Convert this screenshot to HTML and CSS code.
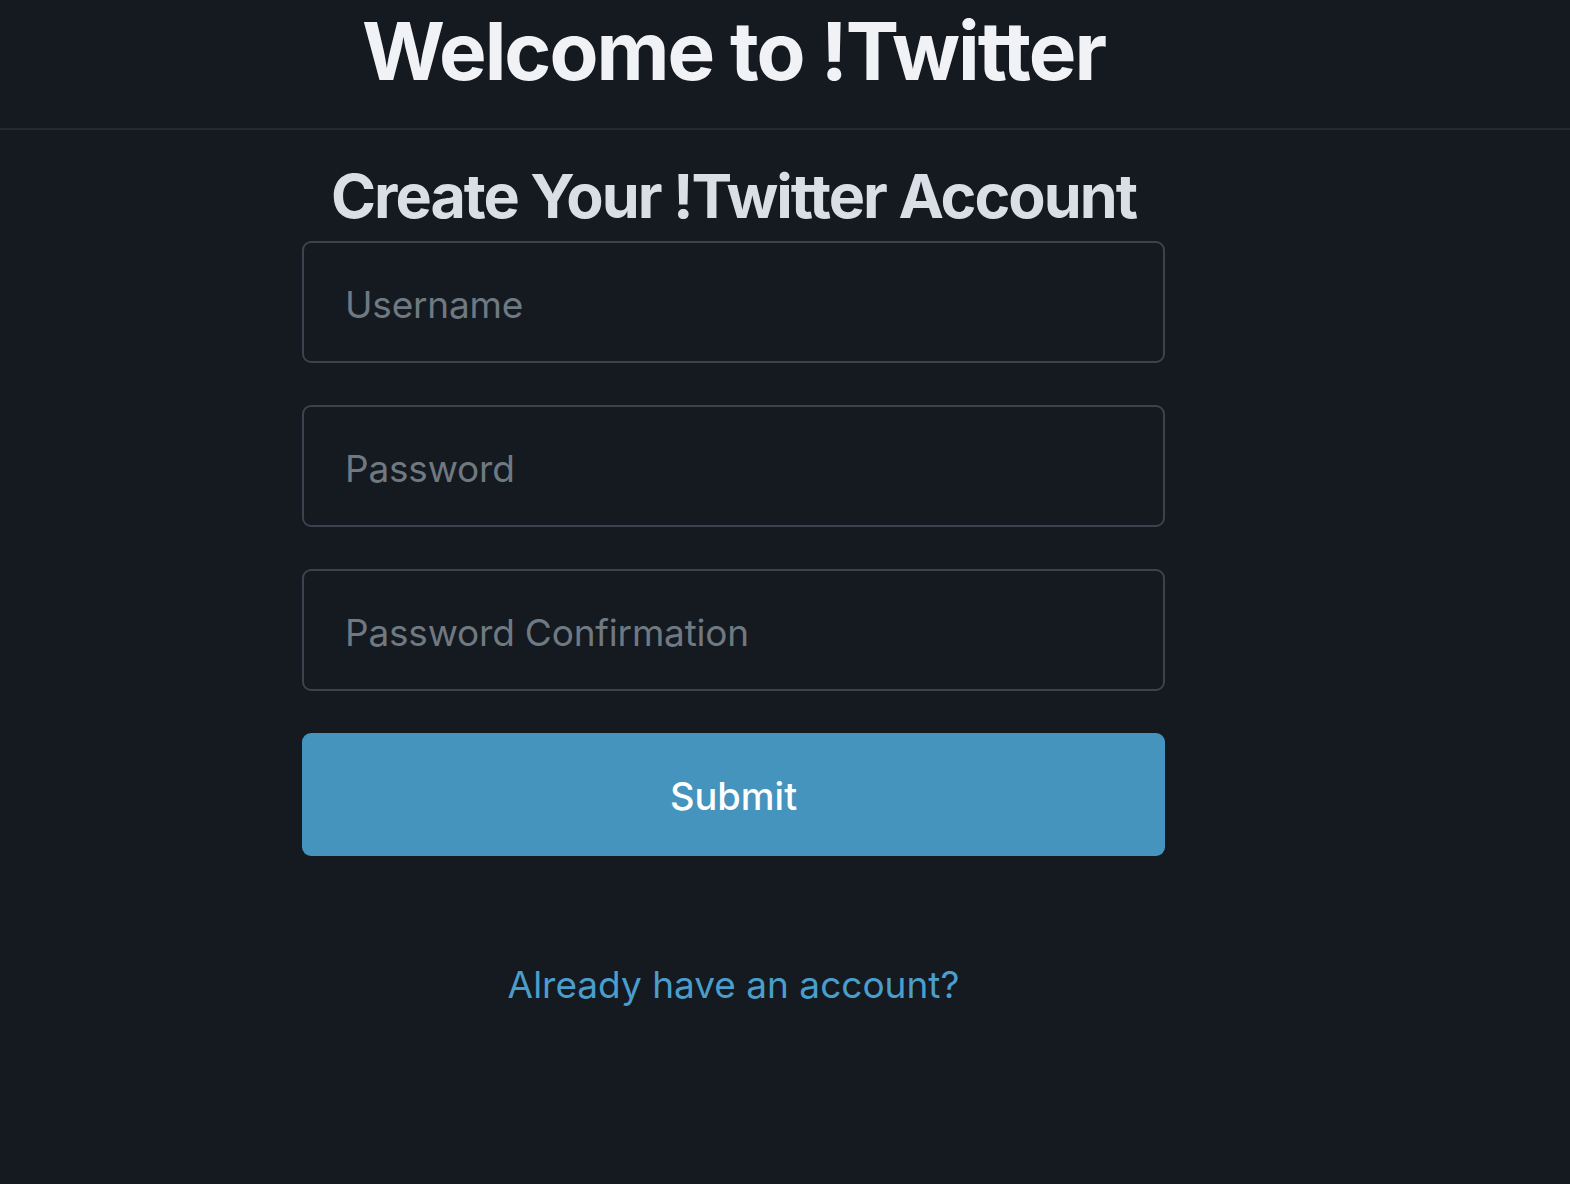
FILE: index.html
```html
<!DOCTYPE html>
<html>
<head>
<meta charset="utf-8">
<link rel="stylesheet" href="styles.css">
</head>
<body>
<header class="site-header">
  <div class="column">
    <h1 class="site-title">Welcome to !Twitter</h1>
  </div>
</header>
<main class="column">
  <h2 class="form-title">Create Your !Twitter Account</h2>
  <form class="signup-form">
    <input class="field" type="text" placeholder="Username">
    <input class="field" type="password" placeholder="Password">
    <input class="field" type="password" placeholder="Password Confirmation">
    <button class="submit" type="button">Submit</button>
  </form>
  <div class="login-row"><a class="login-link" href="#">Already have an account?</a></div>
</main>
</body>
</html>
```
FILE: styles.css
```css
html, body {
  margin: 0;
  padding: 0;
  background: #151920;
  font-family: Inter, "Noto Sans", sans-serif;
  height: 100%;
}
.column {
  width: 863px;
  margin-left: 302px;
}
.site-header {
  border-bottom: 2px solid #232a32;
  height: 130px;
  box-sizing: border-box;
}
.site-title {
  margin: 0;
  padding-top: 3px;
  text-align: center;
  color: #f0f2f6;
  font-size: 80px;
  font-weight: 700;
  letter-spacing: -2px;
  line-height: 96px;
}
.form-title {
  margin: 0;
  padding-top: 26px;
  text-align: center;
  color: #dadee7;
  font-size: 61px;
  font-weight: 700;
  letter-spacing: -2px;
  line-height: 80px;
}
.signup-form {
  display: flex;
  flex-direction: column;
  gap: 42px;
  margin-top: 5px;
}
.field {
  box-sizing: border-box;
  height: 122px;
  background: #151920;
  border: 2px solid #3a434e;
  border-radius: 9px;
  padding: 4px 0 0 41px;
  font-family: Inter, "Noto Sans", sans-serif;
  font-size: 37px;
  letter-spacing: -0.2px;
  color: #e0e4ea;
  outline: none;
}
.field::placeholder {
  color: #6f7982;
}
.submit {
  box-sizing: border-box;
  height: 123px;
  border: none;
  border-radius: 9px;
  background: #4494be;
  color: #ffffff;
  font-family: Inter, "Noto Sans", sans-serif;
  font-size: 38px;
  font-weight: 500;
  padding-top: 4px;
}
.login-row {
  text-align: center;
  margin-top: 106px;
}
.login-link {
  color: #4a9ecb;
  font-size: 37px;
  text-decoration: none;
}
```
